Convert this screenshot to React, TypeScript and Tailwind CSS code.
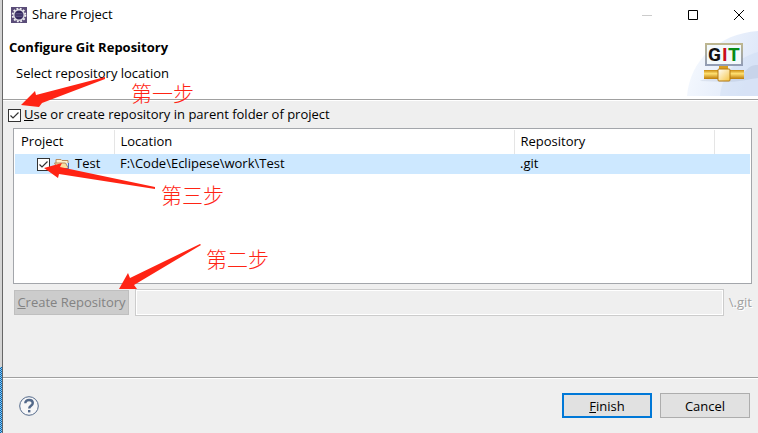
import React from "react";

const rows = [{ name: "Test", location: "F:\\Code\\Eclipese\\work\\Test", repo: ".git" }];

function Check({ id, label }: { id: string; label?: string }) {
  return (
    <span className="grid size-[13px] shrink-0">
      <input id={id} type="checkbox" defaultChecked aria-label={label} className="col-start-1 row-start-1 size-[13px] appearance-none border border-[#333] bg-white" />
      <svg viewBox="0 0 13 13" className="pointer-events-none col-start-1 row-start-1 size-[13px]" fill="none" stroke="#333" strokeWidth="1.2">
        <path d="M2.5 6.5 5 9 10.5 3.5" />
      </svg>
    </span>
  );
}

function EclipseIcon() {
  return (
    <svg viewBox="0 0 16 16" className="size-4 shrink-0">
      <rect width="16" height="16" fill="#5a4c78" />
      <circle cx="8" cy="8" r="6.3" fill="none" stroke="#f2f2f4" strokeWidth="2" strokeDasharray="1.8 1.5" />
      <circle cx="8" cy="8" r="5.2" fill="#33285c" stroke="#dddce2" strokeWidth="1.4" />
      <path d="M4.5 6.5h7M4 8h8M4.5 9.5h7" stroke="#6a6090" strokeWidth=".7" />
    </svg>
  );
}

function Banner() {
  return (
    <svg viewBox="0 0 75 66" className="h-[66px] w-[75px] shrink-0">
      <defs>
        <linearGradient id="sky" x1="0" y1="0" x2="1" y2="0.3">
          <stop offset="0" stopColor="#f8fbff" />
          <stop offset="1" stopColor="#e0e9f9" />
        </linearGradient>
        <linearGradient id="pipe" x1="0" y1="0" x2="0" y2="1">
          <stop offset="0" stopColor="#c98a10" />
          <stop offset=".4" stopColor="#ffe070" />
          <stop offset="1" stopColor="#bd7b08" />
        </linearGradient>
        <linearGradient id="node" x1="0" y1="0" x2="1" y2="1">
          <stop offset="0" stopColor="#fff" />
          <stop offset="1" stopColor="#f5c545" />
        </linearGradient>
        <linearGradient id="frame" x1="0" y1="0" x2="0" y2="1">
          <stop offset="0" stopColor="#bdb68f" />
          <stop offset="1" stopColor="#929db5" />
        </linearGradient>
      </defs>
      <path d="M4 66C7 30 35 4 75 1v65Z" fill="url(#sky)" />
      <path d="M37 66c2-22 16-38 38-44v44Z" fill="#c5d6f2" opacity=".35" />
      <path d="M17 51c4-3 30-3 43-8 7-6 7-8 15-8v13c-9 1-20 4-31 4Z" fill="#68799b" opacity=".13" />
      <rect x="23" y="14" width="36" height="21" fill="#f3f9fc" stroke="url(#frame)" strokeWidth="2" />
      <g fontSize="19" fontWeight="700" fontFamily="Roboto, sans-serif">
        <text x="25" y="31" fill="#111">G</text>
        <text x="39" y="31" fill="#c90e18">I</text>
        <text x="45" y="31" fill="#078b16">T</text>
      </g>
      <rect x="36" y="36" width="9" height="4" fill="#d99d20" />
      <rect x="21" y="40" width="40" height="9" fill="url(#pipe)" />
      <rect x="35" y="39" width="12" height="12" rx="1" fill="url(#node)" stroke="#b57b11" />
    </svg>
  );
}

function Note({ text, className, points }: { text: string; className: string; points: string }) {
  return (
    <>
      <svg className="pointer-events-none absolute left-0 top-0 h-[433px] w-[758px]" viewBox="0 0 758 433" fill="#ff2414">
        <polygon points={points} />
      </svg>
      <span className={"pointer-events-none absolute font-['Noto_Sans_CJK_SC',sans-serif] text-[21px] font-light leading-6 text-[#ff2414] " + className}>{text}</span>
    </>
  );
}

export default function App() {
  return (
    <div className="relative flex min-h-screen overflow-hidden bg-[#efefef] font-['Open_Sans','Noto_Sans_CJK_SC',sans-serif] text-[13px] leading-4 text-black">
      <div className="flex w-[3px] shrink-0 flex-col border-r border-[#666]">
        <div className="h-[367px] bg-[#d4d4d4]" />
        <div className="grow bg-[#0078d7] bg-[conic-gradient(#0068b8_25%,#8fc4ea_0_50%,#0068b8_0_75%,#8fc4ea_0)] bg-[size:2px_2px]" />
      </div>
      <main className="flex min-w-0 grow flex-col">
        <header className="border-b border-[#a0a0a0] bg-white">
          <div className="flex h-[30px] items-center gap-[18px] pl-2 pr-[5px]">
            <div className="flex grow items-center gap-[5px]">
              <EclipseIcon />
              <h1 className="pb-[2px]">Share Project</h1>
            </div>
            <button aria-label="Minimize" className="grid size-7 place-items-center"><svg className="size-[10px]" viewBox="0 0 10 10"><path d="M0 5.5h10" stroke="#ccc" /></svg></button>
            <button aria-label="Maximize" className="grid size-7 place-items-center"><svg className="size-[10px]" viewBox="0 0 10 10"><path d="M.5.5h9v9h-9z" fill="none" stroke="#000" /></svg></button>
            <button aria-label="Close" className="grid size-7 place-items-center"><svg className="size-[10px]" viewBox="0 0 10 10"><path d="m0 0 10 10M10 0 0 10" fill="none" stroke="#000" /></svg></button>
          </div>
          <div className="flex h-[69px] justify-between">
            <div className="pl-[6px] pt-[9px]">
              <h2 className="font-bold">Configure Git Repository</h2>
              <p className="pl-[7px] pt-[10px]">Select repository location</p>
            </div>
            <Banner />
          </div>
        </header>
        <section className="flex grow flex-col border-t border-white pl-[10px] pr-[6px] pt-[6px]">
          <div className="-ml-[5px] flex h-4 items-center gap-[3px]">
            <Check id="parent" />
            <label htmlFor="parent" className="pb-[2px]"><u>U</u>se or create repository in parent folder of project</label>
          </div>
          <div className="mt-[5px] h-[156px] border border-[#a3a6ab] bg-white p-px">
            <table className="w-full table-fixed border-collapse">
              <colgroup><col className="w-[99px]" /><col className="w-[400px]" /><col className="w-[200px]" /><col /></colgroup>
              <thead>
                <tr className="h-6 text-left">
                  <th className="border-r border-[#e5e5e5] pb-[2px] pl-[6px] font-normal">Project</th>
                  <th className="border-r border-[#e5e5e5] pb-[2px] pl-[6px] font-normal">Location</th>
                  <th className="border-r border-[#e5e5e5] pb-[2px] pl-[6px] font-normal">Repository</th>
                  <td />
                </tr>
              </thead>
              <tbody>
                {rows.map((r) => (
                  <tr key={r.name} className="h-5 bg-[#cde8ff]">
                    <td className="pl-[22px]">
                      <span className="flex items-center gap-1">
                        <Check id="project-test" label={r.name} />
                        <span className="flex items-center gap-[5px]">
                          <svg viewBox="0 0 16 12" className="h-3 w-4"><path d="M2 5V1.5h5l1 1h6V5" fill="#fff3cc" stroke="#b98b5c" /><path d="M.5 5h11l3 5.5h-11z" fill="#f9dfa0" stroke="#b58b61" /><path d="M3.5 10.5h11V5" fill="none" stroke="#5370b5" /></svg>
                          <span className="pb-[2px]">{r.name}</span>
                        </span>
                      </span>
                    </td>
                    <td className="pb-[2px] pl-[6px]">{r.location}</td>
                    <td className="pb-[2px] pl-[6px]">{r.repo}</td>
                    <td />
                  </tr>
                ))}
              </tbody>
            </table>
          </div>
          <div className="mt-[5px] flex items-center">
            <button disabled className="ml-px h-[25px] w-[115px] shrink-0 whitespace-nowrap border border-[#bfbfbf] bg-[#ccc] pb-[2px] text-[#838383]"><u>C</u>reate Repository</button>
            <input disabled aria-label="Repository path" className="ml-[6px] h-[27px] min-w-0 grow border border-[#ccc] bg-[#efefef] px-1 inset-ring inset-ring-white" />
            <span className="pb-[2px] pl-[5px] text-[#a0a0a0] [text-shadow:1px_1px_white]">\.git</span>
          </div>
        </section>
        <footer className="flex h-14 items-center gap-2 border-t border-[#a0a0a0] pl-4 pr-2 shadow-[inset_0_1px_white]">
          <button aria-label="Help" className="mr-auto">
            <svg viewBox="0 0 20 20" className="size-5"><circle cx="10" cy="10" r="9.3" fill="#f7f7f8" stroke="#53698a" /><path d="M6.3 7.3c0-4.6 7.5-4.2 7.5-.3 0 2.7-3.6 2.7-3.6 5.5" fill="none" stroke="#53698a" strokeWidth="2.4" /><rect x="9" y="14" width="2.4" height="2.4" fill="#53698a" /></svg>
          </button>
          <button className="h-[25px] w-[90px] border-2 border-[#0078d7] bg-[#e1e1e1]"><u>F</u>inish</button>
          <button className="h-[25px] w-[90px] border border-[#adadad] bg-[#e1e1e1]">Cancel</button>
        </footer>
      </main>
      <Note text="第一步" className="left-[131px] top-[80px]" points="21,105 35,91 36,95 105,77 105,79 42,103 39,107" />
      <Note text="第三步" className="left-[161px] top-[182px]" points="44,168 62,163 60,167 155,187 155,189 59,174 58,178" />
      <Note text="第二步" className="left-[206px] top-[246px]" points="119,289 128,273 130,278 200,244 201,245 134,285 137,289" />
    </div>
  );
}
